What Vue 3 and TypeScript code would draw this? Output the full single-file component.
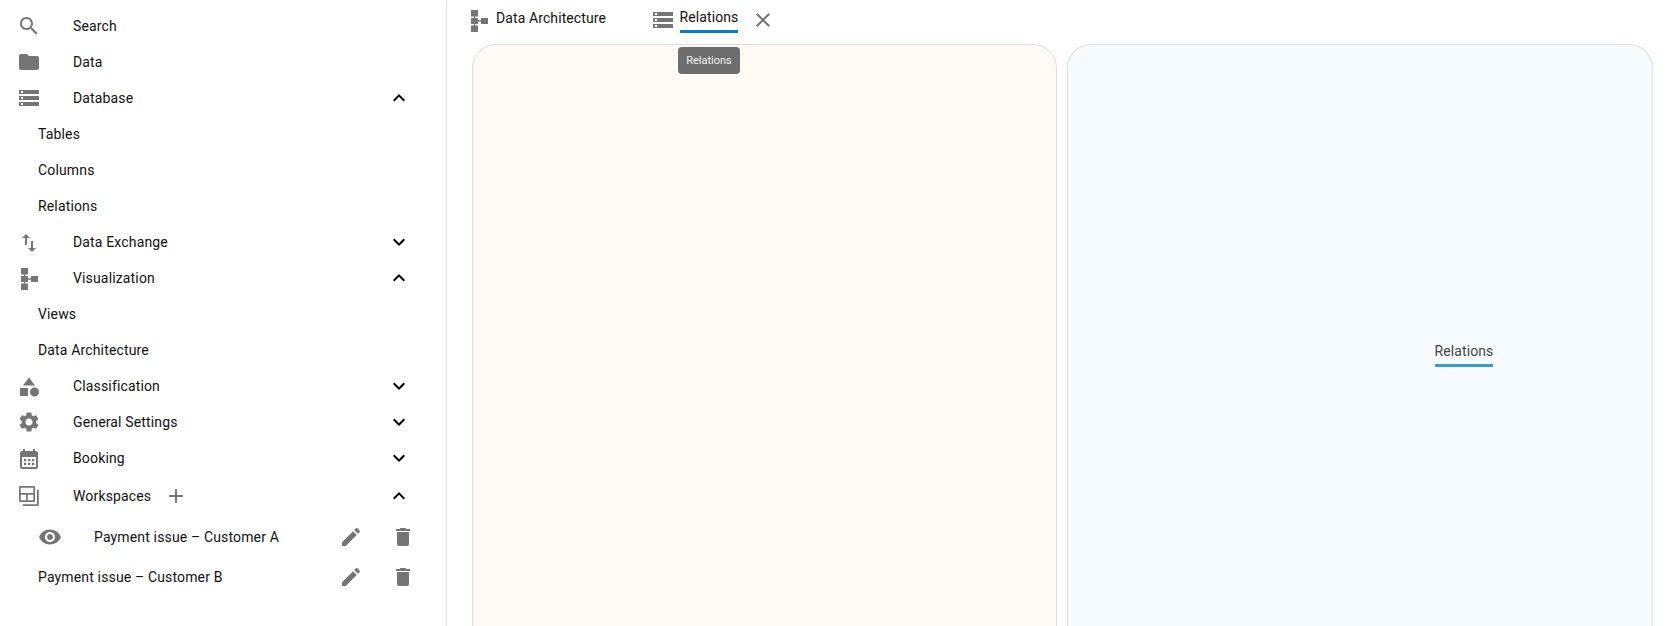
<script setup lang="ts">
const P = {
  search: 'M15.5 14h-.79l-.28-.27C15.41 12.59 16 11.11 16 9.5 16 5.91 13.09 3 9.5 3S3 5.91 3 9.5 5.91 16 9.5 16c1.61 0 3.09-.59 4.23-1.57l.27.28v.79l5 4.99L20.49 19l-4.99-5zm-6 0C7.01 14 5 11.99 5 9.5S7.01 5 9.5 5 14 7.01 14 9.5 11.99 14 9.5 14z',
  folder: 'M10 4H4c-1.1 0-1.99.9-1.99 2L2 18c0 1.1.9 2 2 2h16c1.1 0 2-.9 2-2V8c0-1.1-.9-2-2-2h-8l-2-2z',
  storage: 'M2 20h20v-4H2v4zm2-3h2v2H4v-2zM2 4v4h20V4H2zm4 3H4V5h2v2zm-4 7h20v-4H2v4zm2-3h2v2H4v-2z',
  swap: 'M9 4 5 8h3v7h2V8h3zM14 11v7h-3l4 4 4-4h-3v-7z',
  schema: 'M4 2h7v6.500H8.200V10H11v2.300h3V10h7v6h-7v-2.300h-3V16H8.200v1.500H11V24H4v-6.500h2.800V16H4v-6h2.800V8.500H4z',
  category: 'M12 3.500 5.900 11.500h12.200zM17.500 13.500a4.500 4.500 0 1 0 0 9 4.500 4.500 0 0 0 0-9zM3 14h8v8H3z',
  settings: 'M19.140 12.940c.040-.3.060-.61.060-.94 0-.32-.020-.64-.070-.94l2.030-1.580c.18-.14.23-.41.120-.61l-1.920-3.320c-.12-.22-.37-.29-.59-.22l-2.390.96c-.5-.38-1.030-.7-1.620-.94l-.36-2.540c-.04-.24-.24-.41-.48-.41h-3.840c-.24 0-.43.170-.47.410l-.36 2.540c-.59.24-1.130.57-1.620.94l-2.390-.96c-.22-.080-.47 0-.59.220L2.740 8.870c-.12.21-.08.47.12.61l2.030 1.580c-.05.3-.09.63-.09.94s.020.64.070.94l-2.030 1.580c-.18.14-.23.41-.12.61l1.920 3.320c.12.22.37.29.59.22l2.390-.96c.5.38 1.030.7 1.620.94l.36 2.540c.05.24.24.41.48.41h3.840c.24 0 .44-.17.47-.41l.36-2.540c.59-.24 1.130-.56 1.620-.94l2.390.96c.22.080.47 0 .59-.22l1.920-3.320c.12-.22.070-.47-.12-.61l-2.010-1.580zM12 15.600c-1.980 0-3.600-1.620-3.600-3.600s1.620-3.600 3.600-3.600 3.600 1.620 3.600 3.600-1.620 3.600-3.600 3.600z',
  calendar: 'M6 3h2v2h8V3h2v2h1c1.100 0 2 .9 2 2v14c0 1.100-.9 2-2 2H5c-1.100 0-2-.9-2-2V7c0-1.100.9-2 2-2h1zM5 11v10h14V11zM7 13h2.300v2.300H7zm4 0h2.300v2.300H11zm4 0h2.300v2.300H15zM7 16.700h2.300V19H7zm4 0h2.300V19H11zm4 0h2.300V19H15z',
  workspaces: 'M3 2h14a1 1 0 0 1 1 1v14a1 1 0 0 1-1 1H3a1 1 0 0 1-1-1V3a1 1 0 0 1 1-1zM3.700 3.700v5.400h12.600V3.700zM3.700 10.800v5.500h5.400v-5.500zM10.800 10.800v5.500h5.500v-5.500zM20 6h1.800v15a1 1 0 0 1-1 1H6v-1.800h14z',
  eye: 'M12 4.500C7 4.500 2.730 7.610 1 12c1.730 4.390 6 7.500 11 7.500s9.270-3.110 11-7.500c-1.730-4.390-6-7.500-11-7.500zM12 17c-2.760 0-5-2.240-5-5s2.240-5 5-5 5 2.240 5 5-2.240 5-5 5zm0-8c-1.660 0-3 1.340-3 3s1.340 3 3 3 3-1.340 3-3-1.340-3-3-3z',
  edit: 'M3 17.250V21h3.750L17.810 9.940l-3.750-3.750L3 17.250zM20.710 7.040c.39-.39.39-1.020 0-1.410l-2.340-2.340c-.39-.39-1.020-.39-1.410 0l-1.830 1.830 3.750 3.750 1.830-1.830z',
  trash: 'M6 19c0 1.100.9 2 2 2h8c1.100 0 2-.9 2-2V7H6v12zM19 4h-3.500l-1-1h-5l-1 1H5v2h14V4z',
  up: 'M7.410 15.410 12 10.830l4.590 4.580L18 14l-6-6-6 6z',
  down: 'M7.410 8.590 12 13.170l4.590-4.580L18 10l-6 6-6-6z',
}

interface Row {
  label: string
  icon?: keyof typeof P
  chevron?: 'up' | 'down'
  sub?: boolean
}

const rows: Row[] = [
  { label: 'Search', icon: 'search' },
  { label: 'Data', icon: 'folder' },
  { label: 'Database', icon: 'storage', chevron: 'up' },
  { label: 'Tables', sub: true },
  { label: 'Columns', sub: true },
  { label: 'Relations', sub: true },
  { label: 'Data Exchange', icon: 'swap', chevron: 'down' },
  { label: 'Visualization', icon: 'schema', chevron: 'up' },
  { label: 'Views', sub: true },
  { label: 'Data Architecture', sub: true },
  { label: 'Classification', icon: 'category', chevron: 'down' },
  { label: 'General Settings', icon: 'settings', chevron: 'down' },
  { label: 'Booking', icon: 'calendar', chevron: 'down' },
]
</script>

<template>
  <div class="page">
    <aside class="sidebar">
      <div v-for="row in rows" :key="row.label" class="row" :class="{ sub: row.sub }">
        <svg v-if="row.icon" class="icon" viewBox="0 0 24 24"><path :d="P[row.icon]" /></svg>
        <span class="label">{{ row.label }}</span>
        <svg v-if="row.chevron" class="chevron" viewBox="0 0 24 24"><path :d="P[row.chevron]" /></svg>
      </div>

      <div class="row workspaces">
        <svg class="icon" viewBox="0 0 24 24"><path :d="P.workspaces" /></svg>
        <span class="label">Workspaces</span>
        <svg class="plus" viewBox="0 0 24 24"><path d="M11 5h2v6h6v2h-6v6h-2v-6H5v-2h6z" /></svg>
        <svg class="chevron" viewBox="0 0 24 24"><path :d="P.up" /></svg>
      </div>

      <div class="row ws-item">
        <svg class="eye" viewBox="0 0 24 24"><path :d="P.eye" /></svg>
        <span class="label">Payment issue – Customer A</span>
        <svg class="action first" viewBox="0 0 24 24"><path :d="P.edit" /></svg>
        <svg class="action" viewBox="0 0 24 24"><path :d="P.trash" /></svg>
      </div>
      <div class="row ws-item plain">
        <span class="label">Payment issue – Customer B</span>
        <svg class="action first" viewBox="0 0 24 24"><path :d="P.edit" /></svg>
        <svg class="action" viewBox="0 0 24 24"><path :d="P.trash" /></svg>
      </div>
    </aside>

    <main class="main">
      <nav class="tabs">
        <div class="tab arch">
          <svg class="tab-icon" viewBox="0 0 24 24"><path :d="P.schema" /></svg>
          <span class="tab-text">Data Architecture</span>
        </div>
        <div class="tab active">
          <svg class="tab-icon" viewBox="0 0 24 24"><path :d="P.storage" /></svg>
          <span class="tab-label">Relations</span>
          <svg class="close" viewBox="0 0 24 24"><path d="M19 6.410 17.590 5 12 10.590 6.410 5 5 6.410 10.590 12 5 17.590 6.410 19 12 13.410 17.590 19 19 17.590 13.410 12z" /></svg>
          <div class="tooltip">Relations</div>
        </div>
      </nav>
      <div class="panels">
        <section class="panel warm"></section>
        <section class="panel cool">
          <div class="node">Relations</div>
        </section>
      </div>
    </main>
  </div>
</template>

<style>
html, body { margin: 0; background: #fff; overflow: hidden; }
</style>

<style scoped>
.page {
  display: flex;
  width: 1672px;
  height: 626px;
  overflow: hidden;
  font-family: Roboto, "Liberation Sans", sans-serif;
  font-size: 14px;
  letter-spacing: 0.15px;
  color: #111;
  background: #fff;
}
svg { display: block; fill: #757575; fill-rule: evenodd; flex: none; }

.sidebar {
  width: 447px;
  flex: none;
  box-sizing: border-box;
  padding-top: 7px;
  border-right: 1px solid #dcdcdc;
  margin-top: 1px;
}
.row {
  display: flex;
  align-items: center;
  height: 36px;
  padding-left: 17px;
  position: relative;
}
.row.sub { padding-left: 38px; }
.icon { width: 24px; height: 24px; margin-right: 32px; }
.chevron { width: 24px; height: 24px; fill: #000; position: absolute; left: 387px; top: 6px; }
.workspaces { height: 40px; margin-bottom: 1px; }
.workspaces .chevron { top: 8px; }
.plus { width: 24px; height: 24px; margin-left: 13px; }
.ws-item { height: 40px; padding-left: 38px; }
.eye { width: 24px; height: 24px; margin-right: 32px; }
.action { width: 24px; height: 24px; }
.action.first { margin-left: auto; margin-right: 28px; }
.ws-item .action:last-child { margin-right: 31px; }

.main { flex: 1; min-width: 0; display: flex; flex-direction: column; letter-spacing: 0.1px; }
.tabs { display: flex; height: 44px; padding-left: 20px; flex: none; }
.tab { display: flex; align-items: center; height: 40px; position: relative; }
.arch { width: 184px; gap: 5px; }
.tab-text { margin-bottom: 4px; }
.tab-icon { width: 24px; height: 24px; }
.active { gap: 4.5px; }
.tab-label { padding-bottom: 4px; margin-top: 1px; border-bottom: 3px solid #0a7cc6; line-height: 18px; }
.close { width: 24px; height: 24px; margin-left: 8px; }
.tooltip {
  position: absolute;
  top: 47px;
  left: 27px;
  width: 62px;
  height: 27px;
  border-radius: 4px;
  background: #6e6e6e;
  color: #f2f2f2;
  font-size: 11px;
  line-height: 27px;
  text-align: center;
  letter-spacing: 0;
  z-index: 2;
}
.panels { display: flex; gap: 10px; padding: 0 19px 0 25px; flex: 1; }
.panel {
  border: 1px solid #dedede;
  border-bottom: 0;
  border-radius: 24px 24px 0 0;
  position: relative;
  margin-bottom: -30px;
}
.warm { flex: none; width: 585px; box-sizing: border-box; background: #fffaf6; }
.cool { flex: 1; background: #f6fbff; }
.node {
  position: absolute;
  left: 366.5px;
  top: 297px;
  padding-bottom: 4px;
  border-bottom: 3px solid #3a9ad6;
  color: #444;
  line-height: 18px;
}
</style>
